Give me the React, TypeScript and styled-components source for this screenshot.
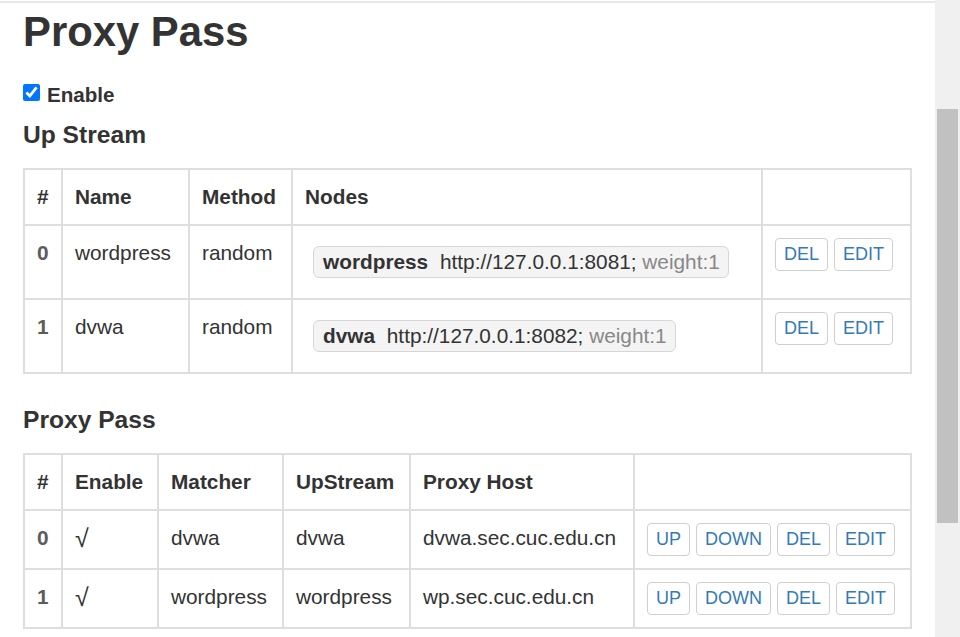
import React from 'react';
import styled, { createGlobalStyle } from 'styled-components';

const GlobalStyle = createGlobalStyle`
  html, body {
    margin: 0;
    padding: 0;
    overflow: hidden;
  }
  body {
    font-family: "Liberation Sans", Arial, sans-serif;
    color: #333;
    background: #fff;
  }
`;

const Screen = styled.div`
  display: flex;
  height: 637px;
  overflow: hidden;
`;

const Main = styled.main`
  flex: 1;
  min-width: 0;
  background: #fff;
`;

const TopRule = styled.div`
  height: 1px;
  border-bottom: 2px solid #e7e7e7;
`;

const Content = styled.div`
  padding: 0 23px;
`;

const Title = styled.h1`
  margin: 6px 0 0;
  font-size: 41.8px;
  line-height: 1.1;
  font-weight: 700;
`;

const EnableRow = styled.label`
  display: flex;
  align-items: center;
  gap: 7px;
  margin-top: 25px;
  height: 30px;
  font-size: 20.6px;
  font-weight: 700;
`;

const Check = styled.input`
  width: 17px;
  height: 17px;
  margin: -5px 0 0 0;
  accent-color: #0075ff;
`;

const SectionTitle = styled.h3`
  margin: ${p => (p.$gap ? `${p.$gap}px` : '0')} 0 20px;
  font-size: 24.6px;
  line-height: 27px;
  font-weight: 700;
`;

const Table = styled.table`
  width: 100%;
  table-layout: fixed;
  border-collapse: collapse;
  border: 2px solid #dedede;
  font-size: 20.8px;
  line-height: 30px;
  margin-bottom: 32px;
`;

const Th = styled.th`
  text-align: left;
  font-weight: 700;
  padding: 12px 12px;
  border: 2px solid #dedede;
  vertical-align: bottom;
`;

const Td = styled.td`
  padding: 12px 12px;
  border: 2px solid #dedede;
  border-top-width: ${p => (p.$thin ? '1px' : '2px')};
  vertical-align: top;
  white-space: nowrap;
`;

const Idx = styled(Td)`
  font-weight: 700;
  color: #5c5c5c;
`;

const Mark = styled.span`
  font-size: 25px;
  line-height: 30px;
`;

const NodeList = styled.div`
  display: flex;
  flex-wrap: wrap;
`;

const Node = styled.span`
  display: block;
  box-sizing: border-box;
  margin: 8px;
  padding: 0 8px 0 9px;
  height: 32px;
  line-height: 30px;
  background: #f4f4f4;
  border: 1px solid #d6d6d6;
  border-radius: 6px;
`;

const NodeName = styled.b`
  margin-right: 6px;
`;

const Weight = styled.span`
  color: #888;
`;

const Actions = styled.div`
  display: flex;
  gap: 6px;
`;

const Btn = styled.button`
  height: 33px;
  padding: 0 8px;
  background: #fff;
  border: 1px solid #cfcfcf;
  border-radius: 4px;
  color: #337ab7;
  font-family: "Liberation Sans", Arial, sans-serif;
  font-size: 18px;
  line-height: 31px;
`;

const Track = styled.div`
  width: 25px;
  background: #f0f0f0;
  padding: 109px 2px 0;
  box-sizing: border-box;
`;

const Thumb = styled.div`
  height: 414px;
  background: #c1c1c1;
`;

const upstreams = [
  { name: 'wordpress', method: 'random', url: 'http://127.0.0.1:8081;' },
  { name: 'dvwa', method: 'random', url: 'http://127.0.0.1:8082;' },
];

const passes = [
  { matcher: 'dvwa', upstream: 'dvwa', host: 'dvwa.sec.cuc.edu.cn' },
  { matcher: 'wordpress', upstream: 'wordpress', host: 'wp.sec.cuc.edu.cn' },
];

export default function App() {
  return (
    <>
      <GlobalStyle />
      <Screen>
        <Main>
          <TopRule />
          <Content>
            <Title>Proxy Pass</Title>
            <EnableRow>
              <Check type="checkbox" defaultChecked />
              Enable
            </EnableRow>

            <SectionTitle $gap={11}>Up Stream</SectionTitle>
            <Table>
              <colgroup>
                <col style={{ width: 38 }} />
                <col style={{ width: 127 }} />
                <col style={{ width: 103 }} />
                <col />
                <col style={{ width: 149 }} />
              </colgroup>
              <thead>
                <tr>
                  <Th>#</Th>
                  <Th>Name</Th>
                  <Th>Method</Th>
                  <Th>Nodes</Th>
                  <Th />
                </tr>
              </thead>
              <tbody>
                {upstreams.map((u, i) => (
                  <tr key={u.name}>
                    <Idx $thin={i === 0}>{i}</Idx>
                    <Td $thin={i === 0}>{u.name}</Td>
                    <Td $thin={i === 0}>{u.method}</Td>
                    <Td $thin={i === 0}>
                      <NodeList>
                        <Node>
                          <NodeName>{u.name}</NodeName> {u.url} <Weight>weight:1</Weight>
                        </Node>
                      </NodeList>
                    </Td>
                    <Td $thin={i === 0}>
                      <Actions>
                        <Btn>DEL</Btn>
                        <Btn>EDIT</Btn>
                      </Actions>
                    </Td>
                  </tr>
                ))}
              </tbody>
            </Table>

            <SectionTitle>Proxy Pass</SectionTitle>
            <Table>
              <colgroup>
                <col style={{ width: 38 }} />
                <col style={{ width: 96 }} />
                <col style={{ width: 125 }} />
                <col style={{ width: 127 }} />
                <col style={{ width: 224 }} />
                <col />
              </colgroup>
              <thead>
                <tr>
                  <Th>#</Th>
                  <Th>Enable</Th>
                  <Th>Matcher</Th>
                  <Th>UpStream</Th>
                  <Th>Proxy Host</Th>
                  <Th />
                </tr>
              </thead>
              <tbody>
                {passes.map((p, i) => (
                  <tr key={p.host}>
                    <Idx $thin={i === 0}>{i}</Idx>
                    <Td $thin={i === 0}>
                      <Mark>√</Mark>
                    </Td>
                    <Td $thin={i === 0}>{p.matcher}</Td>
                    <Td $thin={i === 0}>{p.upstream}</Td>
                    <Td $thin={i === 0}>{p.host}</Td>
                    <Td $thin={i === 0}>
                      <Actions>
                        <Btn>UP</Btn>
                        <Btn>DOWN</Btn>
                        <Btn>DEL</Btn>
                        <Btn>EDIT</Btn>
                      </Actions>
                    </Td>
                  </tr>
                ))}
              </tbody>
            </Table>
          </Content>
        </Main>
        <Track>
          <Thumb />
        </Track>
      </Screen>
    </>
  );
}
